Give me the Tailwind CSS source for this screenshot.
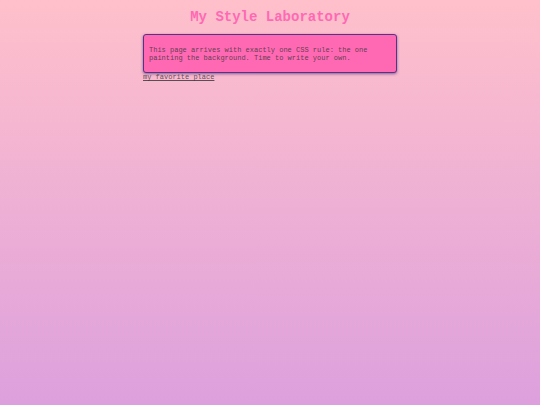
<!DOCTYPE html>
<html lang="en">
<head>
    <meta charset="UTF-8">
    <meta name="viewport" content="width=device-width, initial-scale=1.0">
    <title>My Style Laboratory</title>
    <script src="https://cdn.jsdelivr.net/npm/@tailwindcss/browser@4"></script>
</head>
<body class="min-h-screen bg-linear-to-b/srgb from-[#ffc0cb] to-[#dda0dd] font-['Courier_New','Liberation_Mono',monospace] text-[7px] leading-[8px] text-[#333333]/80">
    <main class="mx-auto max-w-[254px] pt-[9px]">
        <h1 class="mb-[9px] text-center text-[14px] leading-4 font-bold text-[#ff69b4]">My Style Laboratory</h1>
        <div class="rounded-[3px] border border-[#583381] bg-[#ff69b4] px-[5px] pt-[11px] pb-[10px] shadow-[0_1px_3px_#583381b3]">
            <p>This page arrives with exactly one CSS rule: the one painting the background. Time to write your own.</p>
        </div>
        <a href="#" class="block w-fit underline">my favorite place</a>
    </main>
</body>
</html>
